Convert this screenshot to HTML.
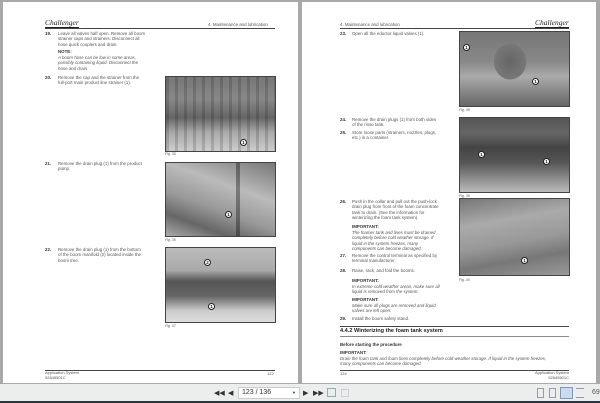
<!DOCTYPE html>
<html><head><meta charset="utf-8"><style>
*{margin:0;padding:0;box-sizing:border-box}
body{width:600px;height:403px;background:#a9a9a9;position:relative;overflow:hidden;font-family:"Liberation Sans",sans-serif;color:#555}
.pg{position:absolute;background:#fff;top:2px;height:381px}
.t{position:absolute;font-size:4.4px;line-height:5.4px;color:#555;white-space:nowrap}
.b{font-weight:bold;color:#333}
.i{font-style:italic}
.line{position:absolute;height:1px;background:#444}
.img{position:absolute;border:1px solid #444}
.c{position:absolute;width:7px;height:7px;border-radius:50%;background:#fff;border:1px solid #222;font-size:4.5px;line-height:5px;text-align:center;color:#222;font-weight:bold}
.logo{position:absolute;font-family:"Liberation Serif",serif;font-style:italic;font-size:7.5px;color:#222;border-bottom:0.5px solid #222}
.tb{position:absolute;left:0;top:384px;width:600px;height:17px;background:#eceded}
.dk{position:absolute;left:0;top:401px;width:600px;height:2px;background:#2b3640}
</style></head><body>
<div class="pg" style="left:3px;width:295px"></div>
<div class="pg" style="left:302px;width:294px"></div>

<!-- left page -->
<div class="logo" style="left:45px;top:18px">Challenger</div>
<div class="t" style="left:208px;top:22px">4. Maintenance and lubrication</div>
<div class="line" style="left:45px;top:28px;width:230px"></div>
<div class="t b" style="left:45px;top:31px">19.</div>
<div class="t" style="left:58px;top:31px">Leave all valves half open. Remove all boom<br>strainer caps and strainers. Disconnect all<br>hose quick couplers and drain.</div>
<div class="t b" style="left:58px;top:49px">NOTE:</div>
<div class="t i" style="left:58px;top:55px">A boom hose can be low in some areas,<br>possibly containing liquid. Disconnect the<br>hose and drain.</div>
<div class="t b" style="left:45px;top:75px">20.</div>
<div class="t" style="left:58px;top:75px">Remove the cap and the strainer from the<br>full-port main product line strainer (1).</div>
<div class="img" style="left:165px;top:76px;width:111px;height:76px;background:repeating-linear-gradient(90deg,rgba(0,0,0,.15) 0 3px,transparent 3px 9px),linear-gradient(180deg,#777,#888 30%,#666 55%,#aaa 75%,#ccc)"></div>
<div class="c" style="left:240px;top:139px">1</div>
<div class="t i" style="left:165px;top:152px;font-size:3.5px">Fig. 35</div>
<div class="t b" style="left:45px;top:161px">21.</div>
<div class="t" style="left:58px;top:161px">Remove the drain plug (1) from the product<br>pump.</div>
<div class="img" style="left:165px;top:162px;width:111px;height:75px;background:repeating-linear-gradient(90deg,transparent 0 70px,rgba(0,0,0,.35) 70px 74px,transparent 74px 80px),linear-gradient(200deg,#777,#bbb 35%,#999 60%,#666 80%,#aaa)"></div>
<div class="c" style="left:225px;top:211px">1</div>
<div class="t i" style="left:165px;top:238px;font-size:3.5px">Fig. 36</div>
<div class="t b" style="left:45px;top:247px">22.</div>
<div class="t" style="left:58px;top:247px">Remove the drain plug (1) from the bottom<br>of the boom manifold (2) located inside the<br>boom tree.</div>
<div class="img" style="left:165px;top:247px;width:111px;height:76px;background:linear-gradient(180deg,#bbb,#aaa 30%,#555 45%,#666 65%,#ccc 85%,#ddd)"></div>
<div class="c" style="left:204px;top:259px">2</div>
<div class="c" style="left:208px;top:303px">1</div>
<div class="t i" style="left:165px;top:324px;font-size:3.5px">Fig. 37</div>
<div class="line" style="left:45px;top:370px;width:230px"></div>
<div class="t" style="left:45px;top:371px;font-size:4px;line-height:4.6px">Application System<br>52845501C</div>
<div class="t" style="left:267px;top:371px;font-size:4px">122</div>

<!-- right page -->
<div class="t" style="left:340px;top:22px">4. Maintenance and lubrication</div>
<div class="logo" style="left:535px;top:18px">Challenger</div>
<div class="line" style="left:340px;top:28px;width:229px"></div>
<div class="t b" style="left:340px;top:31px">23.</div>
<div class="t" style="left:352px;top:31px">Open all the eductor liquid valves (1).</div>
<div class="img" style="left:459px;top:31px;width:111px;height:76px;background:radial-gradient(ellipse 20px 22px at 46% 40%,#666 0,#777 80%,transparent 82%),linear-gradient(180deg,#777,#888 40%,#aaa 60%,#666)"></div>
<div class="c" style="left:463px;top:44px">1</div>
<div class="c" style="left:532px;top:78px">1</div>
<div class="t i" style="left:459px;top:108px;font-size:3.5px">Fig. 38</div>
<div class="t b" style="left:340px;top:117px">24.</div>
<div class="t" style="left:352px;top:117px">Remove the drain plugs (1) from both sides<br>of the rinse tank.</div>
<div class="t b" style="left:340px;top:130px">25.</div>
<div class="t" style="left:352px;top:130px">Store loose parts (strainers, nozzles, plugs,<br>etc.) in a container.</div>
<div class="img" style="left:459px;top:117px;width:111px;height:76px;background:linear-gradient(180deg,#555,#666 20%,#444 40%,#555 60%,#888 80%,#bbb)"></div>
<div class="c" style="left:478px;top:151px">1</div>
<div class="c" style="left:543px;top:158px">1</div>
<div class="t i" style="left:459px;top:194px;font-size:3.5px">Fig. 39</div>
<div class="img" style="left:459px;top:198px;width:111px;height:78px;background:linear-gradient(170deg,#777,#aaa 30%,#999 55%,#777 75%,#999)"></div>
<div class="c" style="left:521px;top:257px">1</div>
<div class="t i" style="left:459px;top:278px;font-size:3.5px">Fig. 40</div>
<div class="t b" style="left:340px;top:199px">26.</div>
<div class="t" style="left:352px;top:199px">Push in the collar and pull out the push-lock<br>drain plug from front of the foam concentrate<br>tank to drain. (See the information for<br>winterizing the foam tank system).</div>
<div class="t b" style="left:352px;top:224px">IMPORTANT:</div>
<div class="t i" style="left:352px;top:230px">The foamer tank and lines must be drained<br>completely before cold weather storage. If<br>liquid in the system freezes, many<br>components can become damaged.</div>
<div class="t b" style="left:340px;top:253px">27.</div>
<div class="t" style="left:352px;top:253px">Remove the control terminal as specified by<br>terminal manufacturer.</div>
<div class="t b" style="left:340px;top:268px">28.</div>
<div class="t" style="left:352px;top:268px">Raise, rack, and fold the booms.</div>
<div class="t b" style="left:352px;top:278px">IMPORTANT:</div>
<div class="t i" style="left:352px;top:284px">In extreme cold weather areas, make sure all<br>liquid is removed from the system.</div>
<div class="t b" style="left:352px;top:297px">IMPORTANT:</div>
<div class="t i" style="left:352px;top:303px">Make sure all plugs are removed and liquid<br>valves are left open.</div>
<div class="t b" style="left:340px;top:316px">29.</div>
<div class="t" style="left:352px;top:316px">Install the boom safety stand.</div>
<div class="line" style="left:340px;top:326px;width:229px"></div>
<div class="t b" style="left:340px;top:328px;font-size:5.6px;line-height:7px;color:#222">4.4.2 Winterizing the foam tank system</div>
<div class="line" style="left:340px;top:336px;width:229px;background:#888"></div>
<div class="t b" style="left:340px;top:342px">Before starting the procedure</div>
<div class="t b" style="left:340px;top:350px">IMPORTANT:</div>
<div class="t i" style="left:340px;top:356px">Drain the foam tank and foam lines completely before cold weather storage. If liquid in the system freezes,<br>many components can become damaged.</div>
<div class="line" style="left:340px;top:370px;width:229px"></div>
<div class="t" style="left:340px;top:371px;font-size:4px">124</div>
<div class="t" style="left:535px;top:371px;font-size:4px;line-height:4.6px;text-align:right">Application System<br>52845501C</div>

<!-- toolbar -->
<div class="tb"></div>
<div class="dk"></div>
<div style="position:absolute;left:214px;top:389px;font-size:7px;color:#333">&#9664;&#9664;</div>
<div style="position:absolute;left:228px;top:389px;font-size:7px;color:#333">&#9664;</div>
<div style="position:absolute;left:238px;top:387px;width:62px;height:12px;background:#fff;border:1px solid #ccc;font-size:7px;line-height:10px;padding-left:3px;color:#333">123 / 136<span style="position:absolute;right:3px;font-size:4px">▼</span></div>
<div style="position:absolute;left:303px;top:389px;font-size:7px;color:#333">&#9654;</div>
<div style="position:absolute;left:313px;top:389px;font-size:7px;color:#333">&#9654;&#9654;</div>
<div style="position:absolute;left:327px;top:388px;width:9px;height:9px;border:1px solid #9aa"></div>
<div style="position:absolute;left:341px;top:389px;width:8px;height:8px;border:1px solid #ccd"></div>
<div style="position:absolute;left:537px;top:388px;width:7px;height:10px;border:1px solid #99a"></div>
<div style="position:absolute;left:549px;top:388px;width:7px;height:10px;border:1px solid #99a"></div>
<div style="position:absolute;left:560px;top:387px;width:13px;height:12px;background:#c9dcef;border:1px solid #7a9ac0"></div>
<div style="position:absolute;left:576px;top:388px;width:8px;height:10px;border-top:1px solid #99a;border-bottom:1px solid #99a"></div>
<div style="position:absolute;left:592px;top:389px;font-size:7px;color:#555">69</div>
</body></html>
